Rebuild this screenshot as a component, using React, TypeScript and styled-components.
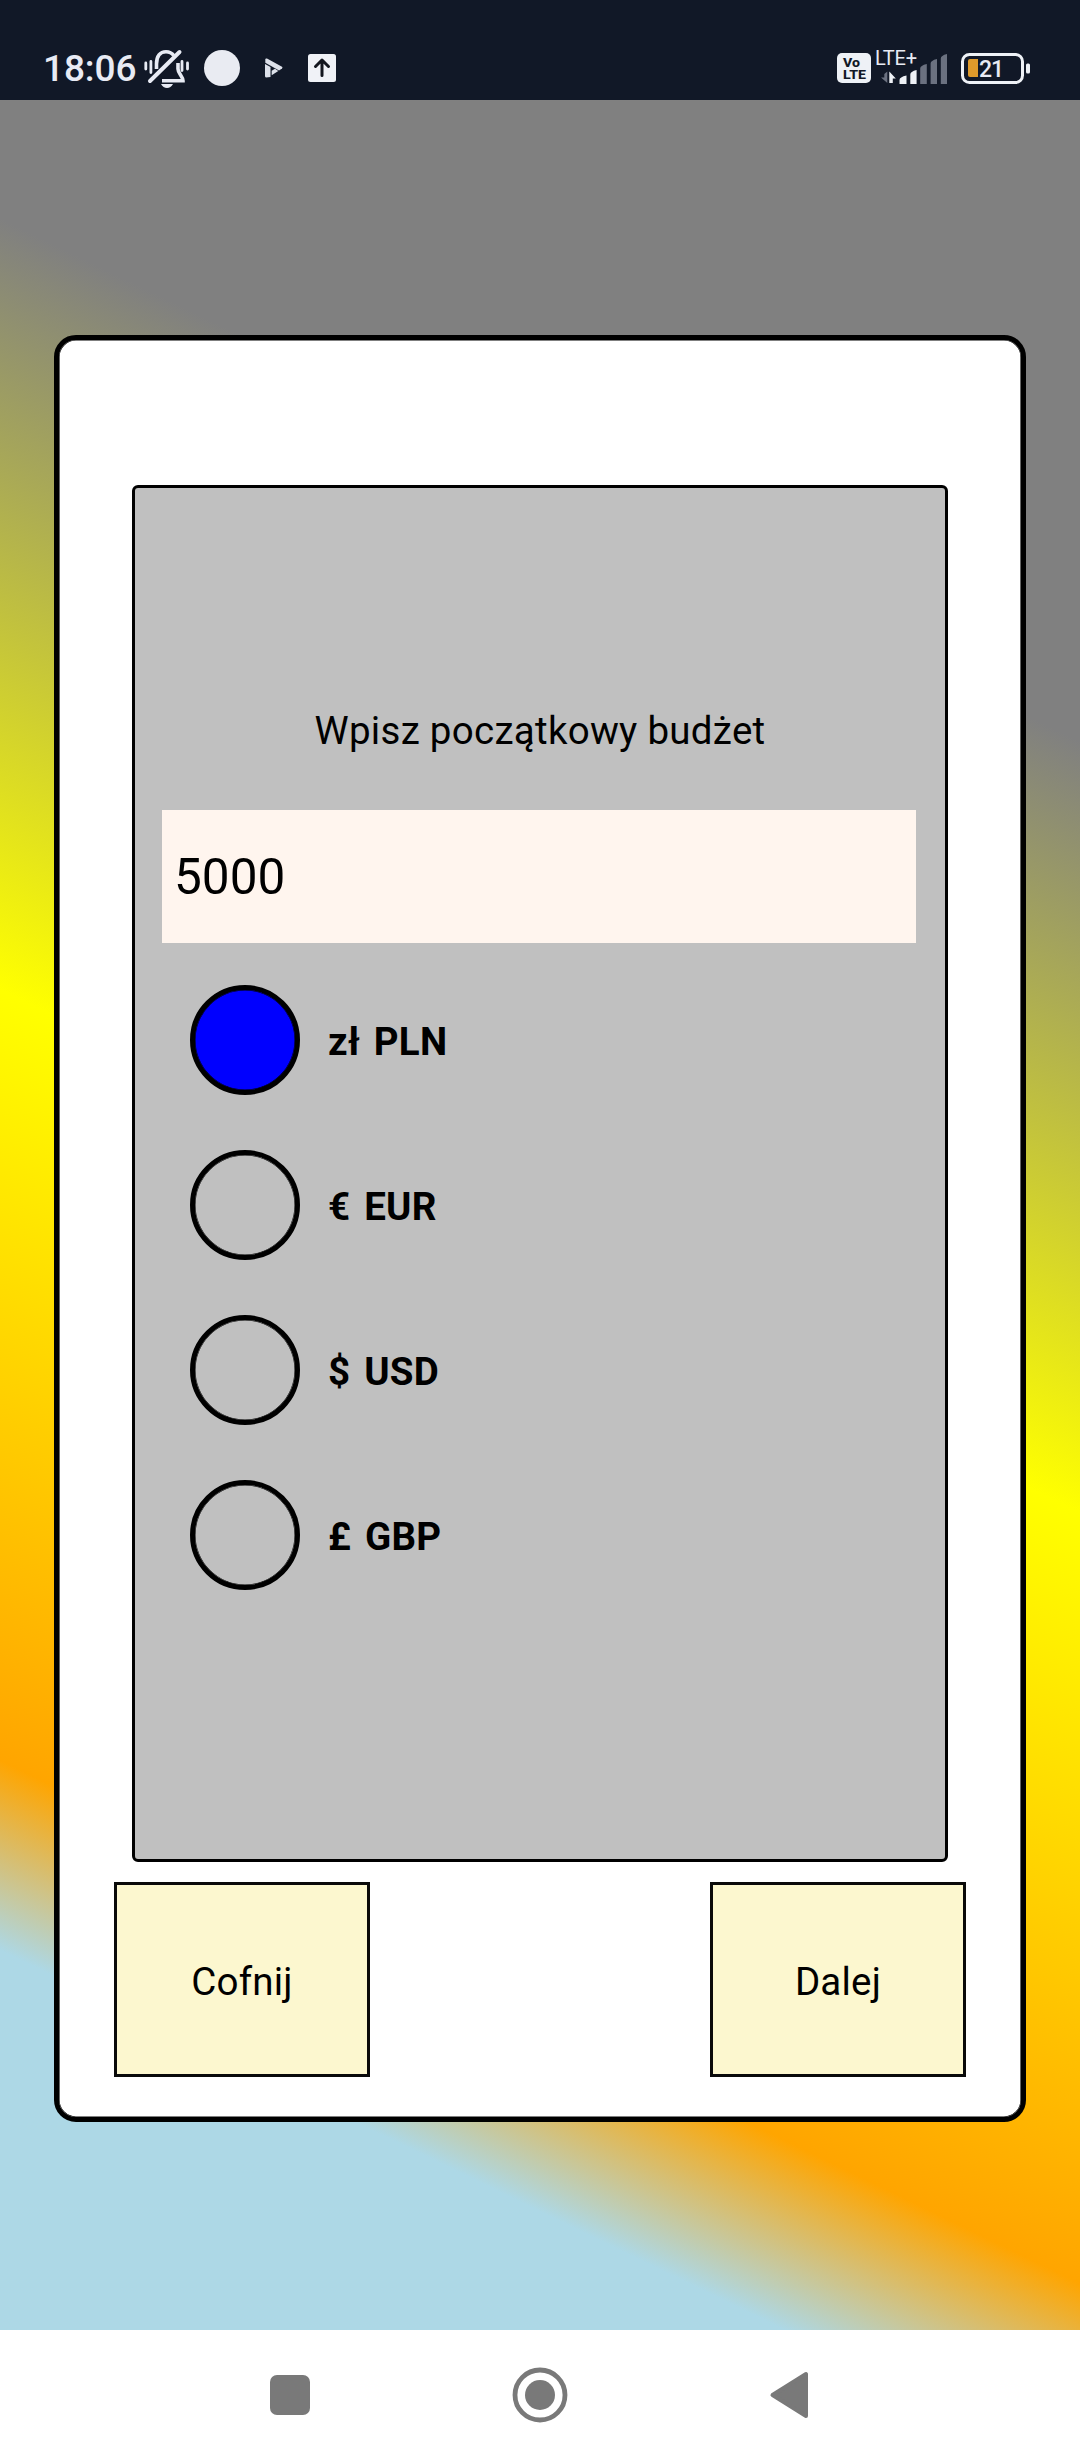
import React, { useState } from "react";
import styled, { createGlobalStyle } from "styled-components";

const GlobalStyle = createGlobalStyle`
  *, *::before, *::after { box-sizing: border-box; }
  body { margin: 0; font-family: Roboto, "Noto Sans", sans-serif; color: #000; }
`;

const Screen = styled.div`
  display: flex;
  flex-direction: column;
  width: 1080px;
  height: 2460px;
  overflow: hidden;
`;

const StatusBar = styled.header`
  display: flex;
  justify-content: space-between;
  height: 100px;
  flex: none;
  padding: 0 50px 0 43px;
  background: #111827;
  color: #e8ebf4;
`;

const StatusGroup = styled.div`
  display: flex;
  align-items: center;
  padding-top: 36px;
`;

const Clock = styled.span`
  width: 99px;
  padding-top: 2px;
  font-size: 37px;
  line-height: 40px;
  font-weight: 500;
  letter-spacing: -0.1px;
  white-space: nowrap;
`;

const Glyph = styled.svg<{ $gap: number }>`
  display: block;
  flex: none;
  margin-left: ${(p) => p.$gap}px;
`;

const Backdrop = styled.main`
  flex: 1;
  display: flex;
  justify-content: center;
  align-items: flex-start;
  padding-top: 235px;
  background: linear-gradient(205.84deg, #808080 23.3%, #ffff00 51.3%, #ffa500 79.3%, #add8e6 86.2%);
`;

const Card = styled.section`
  display: flex;
  flex-direction: column;
  align-items: center;
  width: 972px;
  height: 1787px;
  padding-top: 145px;
  border: 5px solid #000;
  border-radius: 22px;
  background: #fff;
  box-shadow: inset 0 0 0 0.6px #000;
`;

const Panel = styled.form`
  display: flex;
  flex-direction: column;
  width: 816px;
  height: 1377px;
  padding: 215px 27px 0;
  border: 3px solid #000;
  border-radius: 6px;
  background: #c0c0c0;
`;

const Title = styled.h1`
  margin: 0;
  font-size: 38.5px;
  line-height: 56px;
  font-weight: 400;
  letter-spacing: 0.28px;
  text-align: center;
`;

const AmountInput = styled.input`
  width: 754px;
  height: 133px;
  margin: 51px 0 22px;
  padding: 0 12px;
  border: 0;
  outline: 0;
  border-radius: 0;
  background: #fff5ee;
  color: #000;
  font: 400 49.5px Roboto, sans-serif;
`;

const Options = styled.div`
  display: flex;
  flex-direction: column;
  gap: 55px;
  padding: 20px 0 0 28px;
`;

const Option = styled.div`
  display: flex;
  align-items: center;
  gap: 28px;
  height: 110px;
`;

const Radio = styled.button<{ $selected: boolean }>`
  width: 110px;
  height: 110px;
  padding: 0;
  border: 5px solid #000;
  border-radius: 50%;
  background: ${(p) => (p.$selected ? "#0000ff" : "transparent")};
  box-shadow: inset 0 0 0 0.5px #000;
`;

const OptionLabel = styled.span`
  padding-top: 4px;
  font-size: 38.5px;
  line-height: 52px;
  font-weight: 700;
  letter-spacing: 0.3px;
  word-spacing: -3px;
  white-space: pre;
`;

const Actions = styled.footer`
  display: flex;
  justify-content: space-between;
  width: 852px;
  margin-top: 20px;
`;

const ActionButton = styled.button`
  width: 256px;
  height: 195px;
  padding: 4px 0 0;
  border: 3px solid #0a0a0a;
  border-radius: 0;
  background: #fcf7cf;
  color: #000;
  font: 400 38.5px Roboto, sans-serif;
  letter-spacing: 0.2px;
`;

const NavBar = styled.nav`
  display: flex;
  justify-content: center;
  align-items: center;
  gap: 192px;
  height: 130px;
  flex: none;
  background: #fff;
`;

const currencies = [
  { symbol: "zł", code: "PLN" },
  { symbol: "€", code: "EUR" },
  { symbol: "$", code: "USD" },
  { symbol: "£", code: "GBP" },
];

const MutedBell = () => (
  <Glyph $gap={2} width="46" height="40" viewBox="0 0 46 40" fill="none" stroke="currentColor" strokeWidth="3.6">
    <path d="M12.500 21V16C12.500 8 16 3.800 22 3.800c3.400 0 6 1.400 7.800 3.800M34 15v6c0 4.500 5 7.500 5 11.800H18" />
    <path d="M35.500 4 6 33" strokeWidth="4" strokeLinecap="round" />
    <path d="M17 36h12c-1.500 2.600-3.400 3.900-6 3.900s-4.500-1.300-6-3.900z" fill="currentColor" stroke="none" />
    <path d="M1.800 15v6M6.900 13.500v11M38 13.500v9M43.500 15v6" strokeWidth="2.800" strokeLinecap="round" />
  </Glyph>
);

const Disc = () => (
  <Glyph $gap={14} width="36" height="36" viewBox="0 0 36 36">
    <circle cx="18" cy="18" r="18" fill="#e9ebf2" />
  </Glyph>
);

const PlayMark = () => (
  <Glyph $gap={25} width="18" height="20" viewBox="0 0 18 20" fill="#dde1ea">
    <path d="M.300 1Q.500.200 2 .500L17 8.800q1 .700 0 1.800L14 12.500.300 4.800z" />
    <path d="M0 6 5.500 9v10L1 19.500Q0 19 0 18z" />
    <path d="M6.700 12.800 10 10.800l3.300 2.200-6.600 4.300z" />
  </Glyph>
);

const UploadBox = () => (
  <Glyph $gap={25} width="28" height="28" viewBox="0 0 28 28" fill="none">
    <rect width="28" height="28" rx="2.500" fill="#f0f2f7" />
    <path d="M14 21.500V6M7.500 12.500 14 6l6.500 6.500" stroke="#14171f" strokeWidth="3" strokeLinecap="round" strokeLinejoin="round" />
  </Glyph>
);

const VoLte = () => (
  <Glyph $gap={0} width="34" height="30" viewBox="0 0 34 30" fontFamily="Roboto, sans-serif" fontWeight="800" fontSize="12.5">
    <rect width="34" height="30" rx="5" fill="#eef1f6" />
    <text x="6" y="13.500" textLength="17" lengthAdjust="spacingAndGlyphs" fill="#111827">Vo</text>
    <text x="6" y="26" textLength="23" lengthAdjust="spacingAndGlyphs" fill="#111827">LTE</text>
  </Glyph>
);

const Signal = () => (
  <Glyph $gap={1} width="76" height="48" viewBox="-4 -6 76 48" fontFamily="Roboto, sans-serif" fontSize="20">
    <text x="-1" y="15" textLength="42" fill="#e8ebf4">LTE+</text>
    <path d="M11.300 21.500V33L5 27.500h3.300V24z" fill="#6b7180" />
    <path d="M13.300 33V21.500l6.500 7h-3V33z" fill="#eef1f6" />
    <path d="M23.500 34v-4q0-3 7-4.500V34zM34.300 34v-9.500q0-3 6.300-4.500v14z" fill="#eef1f6" />
    <path d="M44.200 34V18.500q0-3 6.600-4.500v20zM54.600 34V13.500q0-3 6.400-4.500v25zM64.800 34V8.500q0-3 6.200-4.500v30z" fill="#6b7180" />
  </Glyph>
);

const Battery = () => (
  <Glyph $gap={13} width="69" height="31" viewBox="0 0 69 31" fontFamily="Roboto, sans-serif" fontWeight="500" fontSize="23">
    <rect x="1.500" y="1.500" width="60" height="28" rx="7" fill="none" stroke="#eef1f6" strokeWidth="3" />
    <path d="M9 6h8v18H9q-2 0-2-2V8q0-2 2-2z" fill="#df9a2b" />
    <text x="18" y="24" textLength="25" fill="#e8ebf4">21</text>
    <rect x="65" y="10.500" width="4" height="10" rx="1.500" fill="#eef1f6" />
  </Glyph>
);

const NavIcons = () => (
  <NavBar>
    <Glyph $gap={0} width="56" height="56" viewBox="0 0 56 56" fill="#797979">
      <rect x="6" y="8" width="40" height="40" rx="7" />
    </Glyph>
    <Glyph $gap={0} width="56" height="56" viewBox="0 0 56 56" fill="#797979">
      <circle cx="28" cy="28" r="25" fill="none" stroke="#797979" strokeWidth="4.8" />
      <circle cx="28" cy="28" r="15" />
    </Glyph>
    <Glyph $gap={0} width="56" height="56" viewBox="0 0 56 56" fill="#797979" stroke="#797979" strokeWidth="4" strokeLinejoin="round">
      <path d="M12.500 28 46 7v42z" />
    </Glyph>
  </NavBar>
);

export default function App() {
  const [amount, setAmount] = useState("5000");
  const [selected, setSelected] = useState("PLN");

  return (
    <Screen>
      <GlobalStyle />
      <StatusBar>
        <StatusGroup>
          <Clock>18:06</Clock>
          <MutedBell />
          <Disc />
          <PlayMark />
          <UploadBox />
        </StatusGroup>
        <StatusGroup>
          <VoLte />
          <Signal />
          <Battery />
        </StatusGroup>
      </StatusBar>
      <Backdrop>
        <Card>
          <Panel onSubmit={(e) => e.preventDefault()}>
            <Title>Wpisz początkowy budżet</Title>
            <AmountInput value={amount} onChange={(e) => setAmount(e.target.value)} />
            <Options>
              {currencies.map(({ symbol, code }) => (
                <Option key={code}>
                  <Radio
                    type="button"
                    aria-label={code}
                    $selected={selected === code}
                    onClick={() => setSelected(code)}
                  />
                  <OptionLabel>{`${symbol}  ${code}`}</OptionLabel>
                </Option>
              ))}
            </Options>
          </Panel>
          <Actions>
            <ActionButton type="button">Cofnij</ActionButton>
            <ActionButton type="button">Dalej</ActionButton>
          </Actions>
        </Card>
      </Backdrop>
      <NavIcons />
    </Screen>
  );
}
